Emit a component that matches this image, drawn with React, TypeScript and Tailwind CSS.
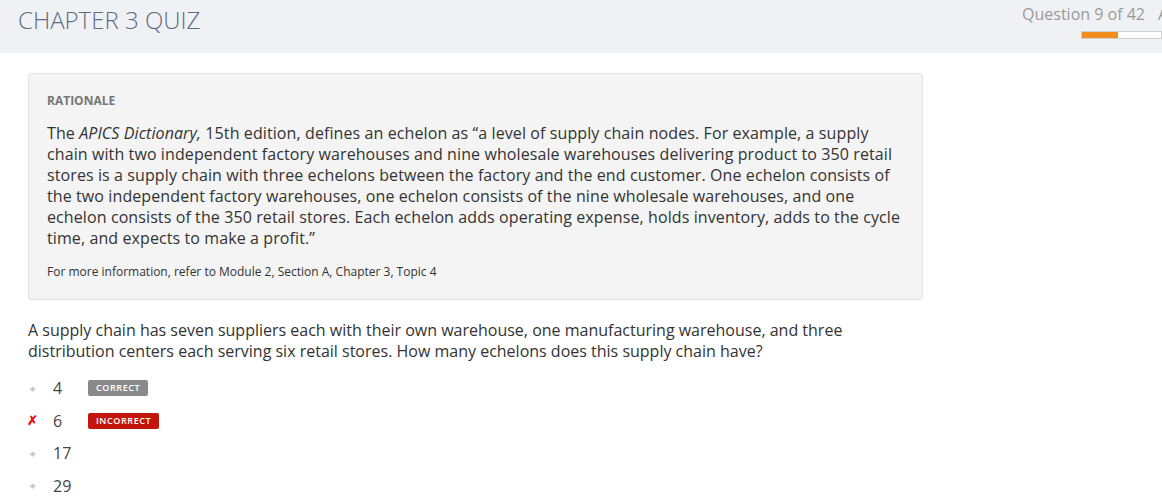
import { Fragment } from 'react';

type Option = { label: string; status?: 'correct' | 'incorrect'; picked?: boolean };

const options: Option[] = [
  { label: '4', status: 'correct' },
  { label: '6', status: 'incorrect', picked: true },
  { label: '17' },
  { label: '29' },
];

export default function App() {
  return (
    <div className="min-h-[504px] bg-white font-['Open_Sans',sans-serif] text-[#333]">
      {/* Header */}
      <header className="flex h-[53px] items-start justify-between bg-[#f0f1f5] pl-[18px]">
        <h1 className="pt-[5px] text-[24px] font-light leading-[30px] text-[#5d6d80]">CHAPTER 3 QUIZ</h1>
        <div className="flex flex-col items-end pt-[4px]">
          <div className="flex items-baseline">
            <span className="text-[16px] leading-[20px] text-[#9a9a9a]">Question 9 of 42</span>
            <span className="ml-[13px] w-[4px] overflow-hidden text-[16px] leading-[20px] text-[#9a9a9a]">A</span>
          </div>
          <div className="mt-[7px] flex h-[8px] w-[81px] border border-[#cfcfcf] bg-white">
            <div className="h-full w-[36px] bg-[#f28c1f]" />
          </div>
        </div>
      </header>

      <main className="w-[923px] pl-[28px] pt-[20px]">
        {/* Rationale */}
        <section className="rounded-[3px] border border-[#e2e2e2] bg-[#f4f4f4] pb-[19px] pl-[18px] pr-[20px] pt-[19px]">
          <h2 className="text-[12px] font-bold leading-[16px] text-[#777]">RATIONALE</h2>
          <p className="mt-[14px] text-[16px] leading-[21px] tracking-[0.1px] text-[#333]">
            The <i>APICS Dictionary,</i> 15th edition, defines an echelon as “a level of supply chain nodes. For example, a supply
            chain with two independent factory warehouses and nine wholesale warehouses delivering product to 350 retail
            stores is a supply chain with three echelons between the factory and the end customer. One echelon consists of
            the two independent factory warehouses, one echelon consists of the nine wholesale warehouses, and one
            echelon consists of the 350 retail stores. Each echelon adds operating expense, holds inventory, adds to the cycle
            time, and expects to make a profit.”
          </p>
          <p className="mt-[15px] text-[12px] leading-[16px] text-[#333]">
            For more information, refer to Module 2, Section A, Chapter 3, Topic 4
          </p>
        </section>

        {/* Question */}
        <p className="mt-[20px] pr-[60px] text-[16px] leading-[21px] text-[#333]">
          A supply chain has seven suppliers each with their own warehouse, one manufacturing warehouse, and three
          distribution centers each serving six retail stores. How many echelons does this supply chain have?
        </p>

        <ul className="mt-[10px] flex flex-col">
          {options.map((o) => (
            <li key={o.label} className="flex h-[32.5px] items-center">
              <span className="flex w-[8px] justify-center">
                {o.picked ? (
                  <span className="text-[13px] font-bold leading-none text-[#e8131b]">✗</span>
                ) : (
                  <span className="text-[7px] leading-none text-[#c8c8c8]">◆</span>
                )}
              </span>
              <span className="ml-[17px] w-[35px] text-[16px] leading-[20px] text-[#444]">{o.label}</span>
              {o.status && (
                <Fragment>
                  {o.status === 'correct' ? (
                    <span className="rounded-[2px] bg-[#8a8a8a] px-[8px] py-[2px] text-[9px] font-semibold leading-[12px] tracking-[0.6px] text-white">
                      CORRECT
                    </span>
                  ) : (
                    <span className="rounded-[2px] bg-[#c3150c] px-[8px] py-[2px] text-[9px] font-semibold leading-[12px] tracking-[0.6px] text-white">
                      INCORRECT
                    </span>
                  )}
                </Fragment>
              )}
            </li>
          ))}
        </ul>
      </main>
    </div>
  );
}
